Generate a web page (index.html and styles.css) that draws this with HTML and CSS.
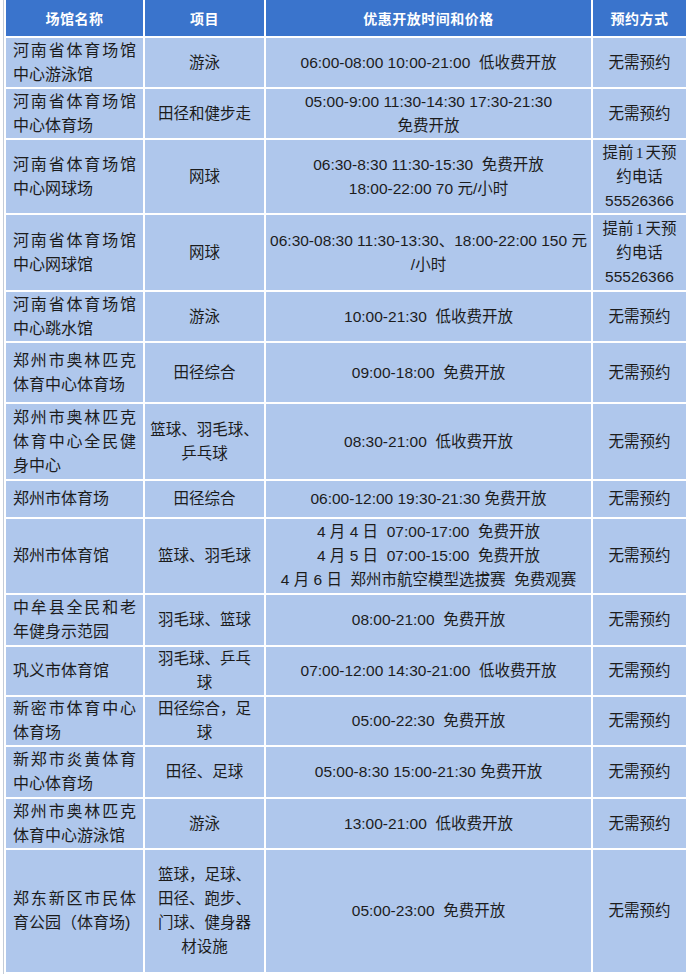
FILE: index.html
```html
<!DOCTYPE html>
<html lang="zh-CN">
<head>
<meta charset="utf-8">
<title>场馆优惠开放</title>
<link rel="stylesheet" href="styles.css">
</head>
<body>
<div class="page">
<table class="venues">
<colgroup>
<col class="c-name"><col class="c-item"><col class="c-time"><col class="c-book">
</colgroup>
<thead>
<tr class="head"><th>场馆名称</th><th>项目</th><th>优惠开放时间和价格</th><th>预约方式</th></tr>
</thead>
<tbody>
<tr class="h49"><td class="name">河南省体育场馆中心游泳馆</td><td>游泳</td><td class="time">06:00-08:00 10:00-21:00 &nbsp;低收费开放</td><td>无需预约</td></tr>
<tr class="h49"><td class="name">河南省体育场馆中心体育场</td><td>田径和健步走</td><td class="time">05:00-9:00 11:30-14:30 17:30-21:30<br>免费开放</td><td>无需预约</td></tr>
<tr class="h73"><td class="name">河南省体育场馆中心网球场</td><td>网球</td><td class="time">06:30-8:30 11:30-15:30 &nbsp;免费开放<br>18:00-22:00 70 元/小时</td><td>提前<span class="num">1</span>天预<br>约电话<br>55526366</td></tr>
<tr class="h75"><td class="name">河南省体育场馆中心网球馆</td><td>网球</td><td class="time">06:30-08:30 11:30-13:30、18:00-22:00 150 元<br>/小时</td><td>提前<span class="num">1</span>天预<br>约电话<br>55526366</td></tr>
<tr class="h49"><td class="name">河南省体育场馆中心跳水馆</td><td>游泳</td><td class="time">10:00-21:30 &nbsp;低收费开放</td><td>无需预约</td></tr>
<tr class="h59"><td class="name">郑州市奥林匹克体育中心体育场</td><td>田径综合</td><td class="time">09:00-18:00 &nbsp;免费开放</td><td>无需预约</td></tr>
<tr class="h75"><td class="name">郑州市奥林匹克体育中心全民健身中心</td><td>篮球、羽毛球、<br>乒乓球</td><td class="time">08:30-21:00 &nbsp;低收费开放</td><td>无需预约</td></tr>
<tr class="h36"><td class="name">郑州市体育场</td><td>田径综合</td><td class="time">06:00-12:00 19:30-21:30 免费开放</td><td>无需预约</td></tr>
<tr class="h74"><td class="name">郑州市体育馆</td><td>篮球、羽毛球</td><td class="time">4 月 4 日 &nbsp;07:00-17:00 &nbsp;免费开放<br>4 月 5 日 &nbsp;07:00-15:00 &nbsp;免费开放<br>4 月 6 日 &nbsp;郑州市航空模型选拔赛 &nbsp;免费观赛</td><td>无需预约</td></tr>
<tr class="h50"><td class="name">中牟县全民和老年健身示范园</td><td>羽毛球、篮球</td><td class="time">08:00-21:00 &nbsp;免费开放</td><td>无需预约</td></tr>
<tr class="h48"><td class="name">巩义市体育馆</td><td>羽毛球、乒乓<br>球</td><td class="time">07:00-12:00 14:30-21:00 &nbsp;低收费开放</td><td>无需预约</td></tr>
<tr class="h48"><td class="name">新密市体育中心体育场</td><td>田径综合，足<br>球</td><td class="time">05:00-22:30 &nbsp;免费开放</td><td>无需预约</td></tr>
<tr class="h50"><td class="name">新郑市炎黄体育中心体育场</td><td>田径、足球</td><td class="time">05:00-8:30 15:00-21:30 免费开放</td><td>无需预约</td></tr>
<tr class="h49"><td class="name">郑州市奥林匹克体育中心游泳馆</td><td>游泳</td><td class="time">13:00-21:00 &nbsp;低收费开放</td><td>无需预约</td></tr>
<tr class="h122"><td class="name">郑东新区市民体育公园（体育场)</td><td>篮球，足球、<br>田径、跑步、<br>门球、健身器<br>材设施</td><td class="time">05:00-23:00 &nbsp;免费开放</td><td>无需预约</td></tr>
</tbody>
</table>
</div>
</body>
</html>
```

FILE: styles.css
```css
html, body {
  margin: 0;
  padding: 0;
  background: #ffffff;
  overflow: hidden;
}

.page {
  margin-left: 3px;
  border-left: 1px solid #c4ccd8;
  min-height: 974px;
}

.venues {
  table-layout: fixed;
  border-collapse: separate;
  border-spacing: 2px;
  width: 684px;
  margin-top: -2px;
  font-family: "Liberation Sans", "Noto Sans CJK SC", sans-serif;
  color: #1c1c1c;
}

.c-name { width: 137px; }
.c-item { width: 119px; }
.c-time { width: 325px; }
.c-book { width: 93px; }

.venues th {
  height: 36px;
  padding: 0;
  background: #3a74cc;
  color: #ffffff;
  font-size: 14px;
  font-weight: bold;
  letter-spacing: 0.5px;
  text-align: center;
  vertical-align: middle;
}

.venues td {
  background: #afc7ec;
  padding: 0 2px;
  font-size: 15.5px;
  line-height: 24px;
  text-align: center;
  vertical-align: middle;
}

.venues td.name {
  padding: 0 7px;
  font-size: 16px;
  line-height: 24px;
  text-align: justify;
}

.venues td.time {
  white-space: nowrap;
}

.num {
  font-family: "Liberation Serif", serif;
  margin: 0 2px;
}

.h36 td { height: 36px; }
.h48 td { height: 48px; }
.h49 td { height: 49px; }
.h50 td { height: 50px; }
.h59 td { height: 59px; }
.h73 td { height: 73px; }
.h74 td { height: 74px; }
.h75 td { height: 75px; }
.h122 td { height: 122px; }
```
